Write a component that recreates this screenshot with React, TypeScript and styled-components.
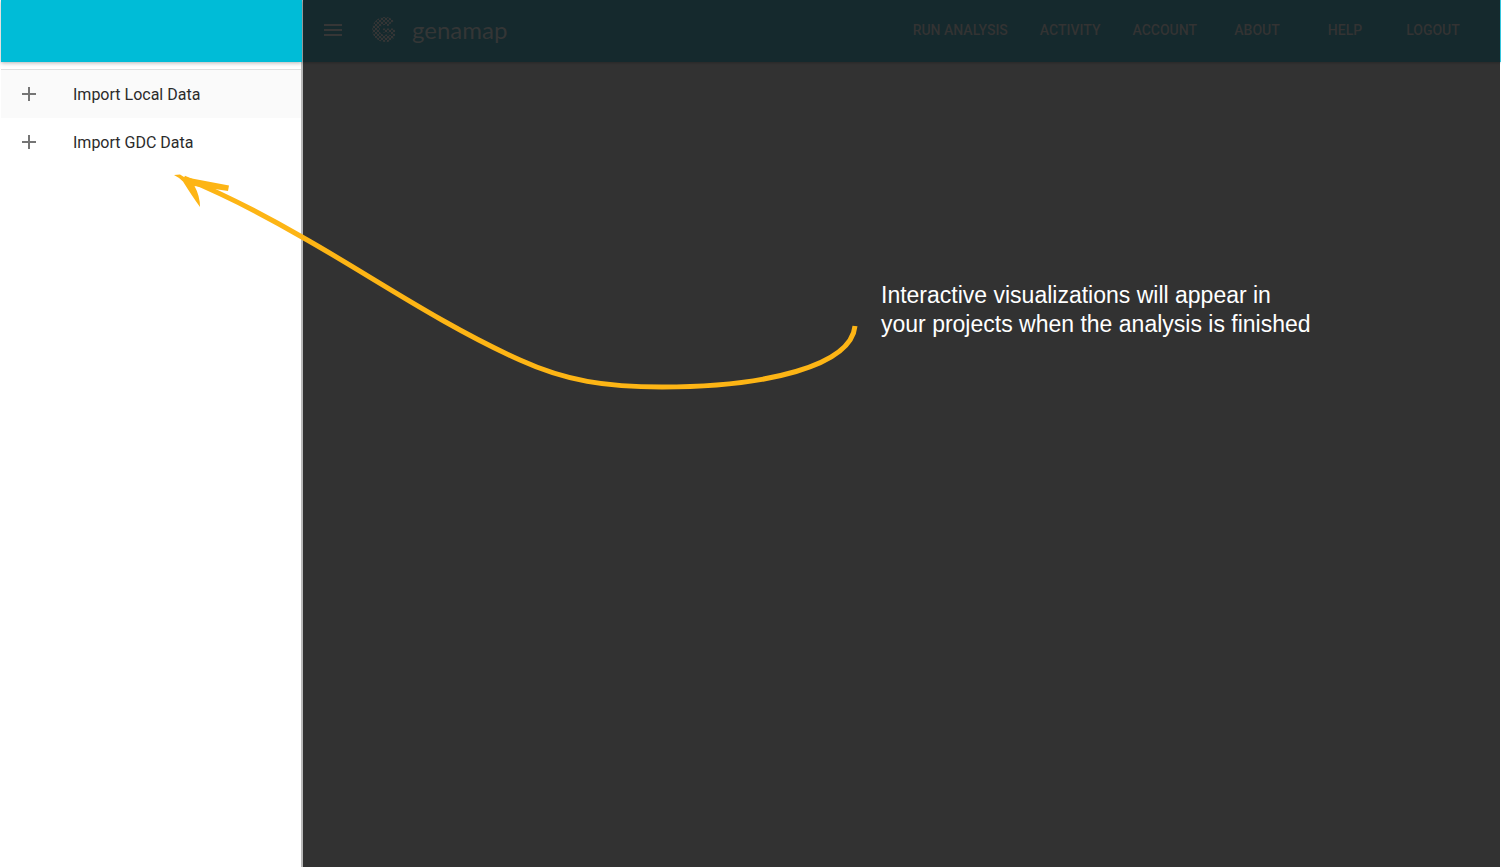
import React from "react";
import styled, { createGlobalStyle } from "styled-components";

const GlobalStyle = createGlobalStyle`
  *, *::before, *::after { box-sizing: border-box; }
  body { margin: 0; background: #fff; font-family: Roboto, "Noto Sans", sans-serif; }
`;

const Page = styled.div`
  position: relative;
  display: grid;
  grid-template-columns: 302px minmax(0, 1fr);
  min-height: 100vh;
  padding: 0 1px 1px;
  overflow: hidden;
`;

const Drawer = styled.aside`
  display: flex;
  flex-direction: column;
  background: #fff;
  border-right: 2px solid #b8b8b8;
`;

const DrawerHeader = styled.div`
  height: 62px;
  margin-right: -1px;
  background: #00bcd7;
  box-shadow: 0 1px 4px rgba(0, 0, 0, 0.3);
`;

const DrawerList = styled.nav`
  display: flex;
  flex-direction: column;
  margin-top: 7px;
  border-top: 1px solid #e0e0e0;
`;

const DrawerItem = styled.button<{ $active?: boolean }>`
  display: flex;
  align-items: center;
  gap: 32px;
  height: 48px;
  padding: 0 16px;
  border: 0;
  background: ${(p) => (p.$active ? "#fafafa" : "#fff")};
  color: #2b2b2b;
  font: 400 16px/24px Roboto, sans-serif;
  text-align: left;
  cursor: pointer;

  svg { width: 24px; height: 24px; fill: #757575; }
`;

const ItemLabel = styled.span`
  padding-top: 2px;
`;

const Main = styled.main`
  background: #323232;
`;

const TopBar = styled.header`
  display: flex;
  align-items: center;
  height: 62px;
  margin-right: -1px;
  padding: 0 23px 2px 18px;
  border-right: 1px solid #35c4dc;
  background: #15292d;
  box-shadow: 0 1px 2px rgba(0, 0, 0, 0.2);
`;

const MenuButton = styled.button`
  display: flex;
  padding: 0;
  border: 0;
  background: none;
  cursor: pointer;

  svg { width: 24px; height: 24px; fill: #363636; }
`;

const Brand = styled.a`
  display: flex;
  align-items: center;
  gap: 15px;
  margin-left: 26px;
  color: #343636;
  font: 400 24px/28px Lato, sans-serif;
  text-decoration: none;
`;

const Nav = styled.nav`
  display: flex;
  margin-left: auto;
`;

const NavLink = styled.a`
  min-width: 88px;
  padding: 0 16px;
  color: #333;
  font: 500 14px/36px Roboto, sans-serif;
  text-align: center;
  text-decoration: none;
  white-space: nowrap;
`;

const Arrow = styled.svg`
  position: absolute;
  top: 0;
  left: 0;
  pointer-events: none;
`;

const Callout = styled.p`
  position: absolute;
  top: 281px;
  left: 881px;
  margin: 0;
  color: #fff;
  font: 400 23px/29px "Liberation Sans", Arial, sans-serif;
  white-space: nowrap;
`;

const PlusIcon = () => (
  <svg viewBox="0 0 24 24" aria-hidden="true">
    <path d="M19 13h-6v6h-2v-6H5v-2h6V5h2v6h6z" />
  </svg>
);

const BrandMark = () => (
  <svg width="26" height="28" viewBox="0 0 26 28" aria-hidden="true">
    <defs>
      <pattern id="dots" width="4" height="4" patternUnits="userSpaceOnUse">
        <circle cx="1" cy="1" r="1.15" fill="#353535" />
        <circle cx="3" cy="3" r="1.15" fill="#353535" />
      </pattern>
    </defs>
    <g fill="none" stroke="url(#dots)">
      <path d="M21.5 6.500A10.500 10.500 0 1 0 22 20" strokeWidth="4" />
      <path d="M18.500 9A7 7 0 1 0 18.500 19" strokeWidth="4" />
      <path d="M12 14.500H22V19Q21 22 15 24.500" strokeWidth="4" />
    </g>
  </svg>
);

const links = ["Run Analysis", "Activity", "Account", "About", "Help", "Logout"];

export default function App() {
  return (
    <>
      <GlobalStyle />
      <Page>
        <Drawer>
          <DrawerHeader />
          <DrawerList aria-label="Data">
            <DrawerItem type="button" $active>
              <PlusIcon />
              <ItemLabel>Import Local Data</ItemLabel>
            </DrawerItem>
            <DrawerItem type="button">
              <PlusIcon />
              <ItemLabel>Import GDC Data</ItemLabel>
            </DrawerItem>
          </DrawerList>
        </Drawer>
        <Main>
          <TopBar>
            <MenuButton type="button" aria-label="Menu">
              <svg viewBox="0 0 24 24" aria-hidden="true">
                <path d="M3 18h18v-2H3v2zm0-5h18v-2H3v2zm0-7v2h18V6H3z" />
              </svg>
            </MenuButton>
            <Brand href="#">
              <BrandMark />
              genamap
            </Brand>
            <Nav aria-label="Main">
              {links.map((label) => (
                <NavLink key={label} href="#">
                  {label.toUpperCase()}
                </NavLink>
              ))}
            </Nav>
          </TopBar>
        </Main>
        <Arrow width="880" height="400" viewBox="0 0 880 400" aria-hidden="true">
          <path
            d="M855 326C851 366 766 387 662 387C606 387 566 381 520 360C440 324 368 274 302 237C264 215 226 195 184 178"
            fill="none"
            stroke="#fdb515"
            strokeWidth="5"
          />
          <path
            d="M174 175L180 174.500L184 177L229 185.500L228 191L194.500 186Q200 196 200 207Q192 196 183 181.500Q180 178 174 175Z"
            fill="#fdb515"
          />
        </Arrow>
        <Callout>
          Interactive visualizations will appear in
          <br />
          your projects when the analysis is finished
        </Callout>
      </Page>
    </>
  );
}
